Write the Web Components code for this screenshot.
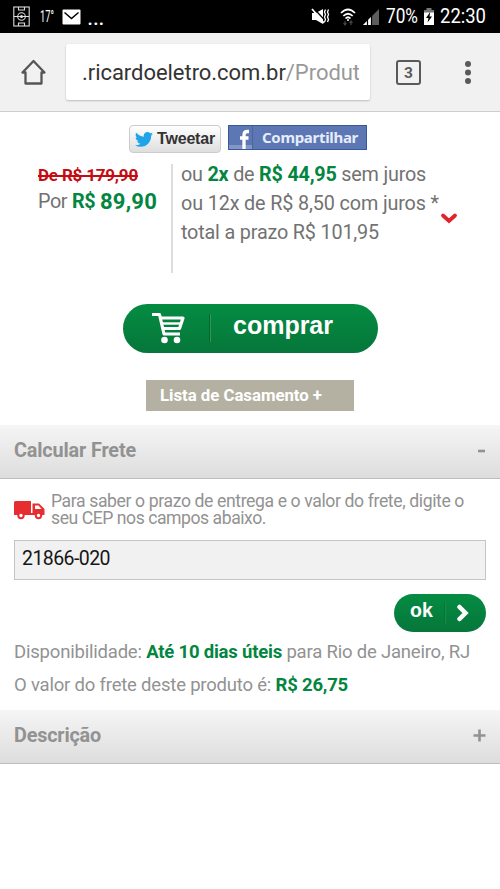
<!DOCTYPE html>
<html lang="pt-BR">
<head>
<meta charset="utf-8">
<title>Ricardo Eletro</title>
<style>
html,body{margin:0;background:#fff}
body{width:500px;height:889px;overflow:hidden;font-family:Roboto,"Liberation Sans",sans-serif;color:#727272}
b{font-weight:700;color:#038640}
</style>
</head>
<body>
<store-screen></store-screen>
<script>
const define=(name,html,setup)=>customElements.define(name,class extends HTMLElement{
  connectedCallback(){
    if(this.shadowRoot)return;
    const t=document.createElement('template');
    t.innerHTML=html;
    this.attachShadow({mode:'open'}).append(t.content.cloneNode(true));
    if(setup)setup(this,this.shadowRoot);
  }
});

// One line of text that spans the given width, by tracking or, with "condense", by narrower letters.
define('fit-line',`<style>:host{display:block;white-space:nowrap}span{display:inline-block;transform-origin:0 50%;text-decoration:inherit}</style><span><slot></slot></span>`,(el,root)=>{
  const s=root.querySelector('span'),w=parseFloat(el.getAttribute('width'));
  const now=s.getBoundingClientRect().width;
  if(el.hasAttribute('condense'))s.style.transform='scaleX('+(w/now)+')';
  else s.style.letterSpacing=((w-now)/el.textContent.length)+'px';
});

define('status-bar',`<style>
:host{display:flex;height:33px;background:#000;color:#fff;align-items:center;box-sizing:border-box;padding:0 14px 0 13px}
svg{display:block;flex:none}
.sp{flex:1}
.deg{font-size:16px;margin-left:10px;width:14px}
.dots{margin-left:6px;font-size:24px;line-height:22px}
.t{font-size:21px;line-height:35px}
</style>
<svg width="17" height="21" viewBox="0 0 17 21" fill="none" stroke="#ddd" stroke-width="1.1"><rect x=".8" y="1" width="15.4" height="19"/><path d="M1 10.500H16M5.500 1V4H11.500V1M5.500 20V17H11.500V20"/><circle cx="8.500" cy="10.500" r="3.800"/><circle cx="8.500" cy="10.500" r="1"/></svg>
<div class="deg"><fit-line condense width="14">17°</fit-line></div>
<svg style="margin-left:8px" width="19" height="16" viewBox="0 0 19 16"><rect x=".5" y=".5" width="18" height="15" rx="1" fill="#fff"/><path d="M2.500 3.500L9.500 9.500L16.500 3.500" fill="none" stroke="#000" stroke-width="1.500"/></svg>
<div class="dots"><fit-line width="17">...</fit-line></div>
<div class="sp"></div>
<svg width="19" height="17" viewBox="0 0 19 17"><path d="M1 5H5L12 1V16L5 12H1Z" fill="#fff"/><path d="M2.500 0L14.500 13" stroke="#000" stroke-width="1.300"/><path d="M1 1L13 15" stroke="#fff" stroke-width="1.800"/><path d="M14.500 1.500L13.500 4L14.500 6.500L13.500 9L14.500 11.500L13.500 14M17.500 1.500L16.500 4L17.500 6.500L16.500 9L17.500 11.500L16.500 14" fill="none" stroke="#fff" stroke-width="1.300"/></svg>
<svg style="margin-left:10px" width="16" height="18" viewBox="0 0 16 18" fill="none" stroke="#fff" stroke-width="1.700"><path d="M1 5Q8-2 15 5M3.300 8Q8 3.500 12.700 8M5.500 10.500Q8 8 10.500 10.500"/><circle cx="8" cy="12" r="1" fill="#fff" stroke="none"/><path d="M5 13V17M11 13V17M3.500 15L5 17L6.500 15M9.500 15L11 13L12.500 15" stroke="#444" stroke-width="1.200"/></svg>
<svg style="margin-left:6px" width="18" height="18" viewBox="0 0 18 18"><path d="M1 17L17 1V17Z" fill="#5d5d5d"/><path d="M1 17L9 9V17Z" fill="#fff"/><path d="M5.500 7V18M9.500 5V18" stroke="#000" stroke-width="1.200"/></svg>
<div class="t" style="margin-left:6px;width:33px"><fit-line condense width="32">70%</fit-line></div>
<svg style="margin-left:4px" width="12" height="17" viewBox="0 0 12 17"><path d="M3.500 0H8.500V2H11V5H1V2H3.500Z" fill="#777"/><path d="M1 4.500H11V17H1Z" fill="#fff"/><path d="M7.200 4L3 10H5.500L4.500 14.500L9 8.500H6.500Z" fill="#000"/></svg>
<div class="t" style="margin-left:5px;width:46px"><fit-line condense width="46">22:30</fit-line></div>`);

define('browser-bar',`<style>
:host{display:flex;height:79px;box-sizing:border-box;background:#f1f1f1;border-bottom:1px solid #cdcdcd;align-items:flex-start;padding:11px 0 0 20px}
svg{display:block;flex:none}
.url{width:304px;height:56px;box-sizing:border-box;margin-left:19px;background:#fff;border-radius:2px;box-shadow:0 1px 2px #bbb;padding:0 11px 0 16px;font-size:22px;line-height:57px;color:#333}
.clip{overflow:hidden}
i{font-style:normal;color:#999}
.tabs{box-sizing:border-box;width:25px;height:25px;margin:16px 0 0 26px;border:2.500px solid #5a5a5a;border-radius:3px;font-weight:700;font-size:15.500px;line-height:22px;text-align:center;color:#5a5a5a}
</style>
<svg style="margin-top:14px" width="27" height="28" viewBox="0 0 27 28"><path d="M2.500 14.500L13.500 3L24.500 14.500H21.500V25.500H5.500V14.500Z" fill="none" stroke="#555" stroke-width="2.300" stroke-linejoin="round"/></svg>
<div class="url"><div class="clip"><fit-line width="278">.ricardoeletro.com.br<i>/Produt</i></fit-line></div></div>
<div class="tabs">3</div>
<svg style="margin:16px 0 0 43px" width="8" height="25" viewBox="0 0 8 25" fill="#5a5a5a"><circle cx="4" cy="4" r="3"/><circle cx="4" cy="12.500" r="3"/><circle cx="4" cy="21" r="3"/></svg>`);

define('share-row',`<style>
:host{display:flex;padding:13px 0 0 129px;gap:7px}
.tw{box-sizing:border-box;width:92px;height:28px;border:1px solid #ccc;border-radius:4px;background:linear-gradient(#fff,#dedede);display:flex;align-items:center;padding-left:5px;color:#333;font:700 16px/26px "Liberation Sans",sans-serif}
.tw fit-line{margin-left:4px}
.fb{box-sizing:border-box;width:139px;height:25px;border:1px solid #3b5998;background:#5c77b3;display:flex;color:#e6ecfa;font:700 15px/23px "Noto Sans","Liberation Sans",sans-serif}
svg{display:block;flex:none}
.fb fit-line{margin-left:9px}
</style>
<div class="tw"><svg width="18" height="15" viewBox="0 0 24 20"><path fill="#1da5e8" d="M24 2.400a10 10 0 0 1-2.800.8A5 5 0 0 0 23.300.5a10 10 0 0 1-3.100 1.200A4.900 4.900 0 0 0 11.800 6.200 14 14 0 0 1 1.700 1.100 4.900 4.900 0 0 0 3.200 7.700 5 5 0 0 1 1 7.100a4.900 4.900 0 0 0 3.900 4.900 5 5 0 0 1-2.200.1 4.900 4.900 0 0 0 4.600 3.400A10 10 0 0 1 0 17.500 14 14 0 0 0 7.500 19.700C16.700 19.700 21.800 12 21.500 5A10 10 0 0 0 24 2.400Z"/></svg><fit-line width="58">Tweetar</fit-line></div>
<div class="fb"><svg width="24" height="23" viewBox="0 0 24 23"><path d="M0 19H24V23H0Z" fill="#8297c4"/><path d="M23.500 0V23" stroke="#4b659f"/><path d="M20 5.500H18.500Q15 5.500 15 9V23M11 12H19.500" fill="none" stroke="#fff" stroke-width="3.300"/></svg><fit-line width="96">Compartilhar</fit-line></div>`);

define('price-panel',`<style>
:host{display:flex;height:109px;box-sizing:content-box;padding:11px 0 0 38px;line-height:29px}
.l{width:135px;border-right:2px solid #ddd;box-sizing:border-box}
.l,.r{font-size:19.800px}
.old{font-size:17px;font-weight:700;color:#c30d12;height:24px;line-height:22px;text-decoration:line-through;text-decoration-thickness:1.500px}
.now{display:flex;gap:5px;line-height:28px}
b{color:#038640}
.now b:last-child{font-size:22px}
.r{padding-left:8px;margin-top:-4px;width:258px}
svg{display:block;margin:48px 0 0 1px}
</style>
<div class="l"><fit-line class="old" width="100">De R$ 179,90</fit-line><div class="now"><fit-line width="29">Por</fit-line><b><fit-line width="23">R$</fit-line></b><b><fit-line width="57">89,90</fit-line></b></div></div>
<div class="r"><fit-line width="245">ou <b>2x</b> de <b>R$ 44,95</b> sem juros</fit-line><fit-line width="258">ou 12x de R$ 8,50 com juros *</fit-line><fit-line width="198">total a prazo R$ 101,95</fit-line></div>
<svg width="18" height="14" viewBox="0 0 18 14"><path d="M3 3.500L9 9L15 3.500" fill="none" stroke="#e0232c" stroke-width="3.800" stroke-linecap="round"/></svg>`);

define('buy-button',`<style>
:host{display:flex;box-sizing:border-box;width:255px;height:49px;margin:31px 0 0 123px;border-radius:25px;background:linear-gradient(#048c42,#06763a);padding-left:28px;color:#fff;font:700 25px/42px "Liberation Sans",sans-serif}
svg{display:block}
.d{width:1px;height:28px;margin:10px 22px 0 24px;background:#06652f;border-right:1px solid #2b9858}
</style>
<svg width="34" height="42" viewBox="0 0 34 42" fill="none" stroke="#fff"><path d="M1 10.500H8.500L13 30H29M10 14H32L28.500 24.500H12.500" stroke-width="3.200" stroke-linejoin="round"/><path d="M12 19.500H30" stroke-width="2.400"/><circle cx="13.500" cy="36" r="3.300" fill="#fff" stroke="none"/><circle cx="26" cy="36" r="3.300" fill="#fff" stroke="none"/></svg><div class="d"></div><fit-line width="100">comprar</fit-line>`);

define('list-button',`<style>
:host{display:block;box-sizing:border-box;width:208px;height:31px;margin:27px 0 14px 146px;background:#b5b1a2;color:#fff;font-weight:700;font-size:16.800px;line-height:31px;padding-left:14px}
</style><fit-line width="162">Lista de Casamento +</fit-line>`);

define('section-header',`<style>
:host{display:flex;box-sizing:border-box;height:54px;border-bottom:1px solid #bcbdbc;background:linear-gradient(#f5f5f5,#dcdddc);padding:0 14px;justify-content:space-between;font-weight:700;font-size:19.800px;line-height:51px;color:#929292}
svg{display:block;margin-top:19px}
</style><slot></slot><svg width="13" height="13" viewBox="0 0 13 13"><path fill="none" stroke="#929292" stroke-width="2.600"/></svg>`,(el,root)=>{
  root.querySelector('path').setAttribute('d',el.hasAttribute('open')?'M5 7H12':'M.5 6.500H12.500M6.500 .5V12.500');
});

define('freight-panel',`<style>
:host{display:block;height:231px;box-sizing:border-box;padding:14px 14px 0;color:#929292}
.info{display:flex;font-size:17.600px;line-height:17px}
.info svg{display:block;margin:7px 6px 0 0}
.cep{box-sizing:border-box;height:40px;border:1.500px solid #c5c5c5;background:#f1f1f1;margin-top:13px;padding-left:7px;color:#161616;font-size:19.500px;line-height:36px}
.ok{display:flex;box-sizing:border-box;width:92px;height:38px;margin:14px 0 0 380px;border-radius:19px;background:linear-gradient(#048c42,#06763a);padding-left:16px;color:#fff;font:700 19.500px/33px "Liberation Sans",sans-serif}
.d{width:1px;height:22px;margin:8px 10px 0 11px;background:#067236;border-right:1px solid #178d4a}
.ok svg{display:block;margin-top:10px}
.line{font-size:18.500px;line-height:33px}
b{color:#038640}
</style>
<div class="info"><svg width="31" height="20" viewBox="0 0 31 20"><path d="M0 2.500Q0 1 1.500 1H17V15H0ZM18.500 3.500H25L30.500 9V15H18.500Z" fill="#e62e31"/><path d="M21 5.500H24.500L27.500 9H21Z" fill="#fff"/><path d="M16 14H20" stroke="#e62e31" stroke-width="2"/><circle cx="7" cy="15.500" r="2.700" fill="#fff" stroke="#e62e31" stroke-width="2"/><circle cx="24.500" cy="15.500" r="2.700" fill="#fff" stroke="#e62e31" stroke-width="2"/></svg><div><fit-line width="413">Para saber o prazo de entrega e o valor do frete, digite o</fit-line><fit-line width="215">seu CEP nos campos abaixo.</fit-line></div></div>
<div class="cep"><fit-line width="88">21866-020</fit-line></div>
<div class="ok"><fit-line width="23">ok</fit-line><div class="d"></div><svg width="14" height="18" viewBox="0 0 14 18"><path d="M3.500 3L9.500 9L3.500 15" fill="none" stroke="#fff" stroke-width="4.500" stroke-linecap="round"/></svg></div>
<div class="line" style="margin-top:4px"><fit-line width="456">Disponibilidade: <b>Até 10 dias úteis</b> para Rio de Janeiro, RJ</fit-line><fit-line width="334">O valor do frete deste produto é: <b>R$ 26,75</b></fit-line></div>`);

define('store-screen',`<style>:host{display:flex;flex-direction:column;width:500px;height:889px;background:#fff}</style>
<status-bar></status-bar>
<browser-bar></browser-bar>
<share-row></share-row>
<price-panel></price-panel>
<buy-button></buy-button>
<list-button></list-button>
<section-header open><fit-line width="122">Calcular Frete</fit-line></section-header>
<freight-panel></freight-panel>
<section-header><fit-line width="87">Descrição</fit-line></section-header>`);
</script>
</body>
</html>
